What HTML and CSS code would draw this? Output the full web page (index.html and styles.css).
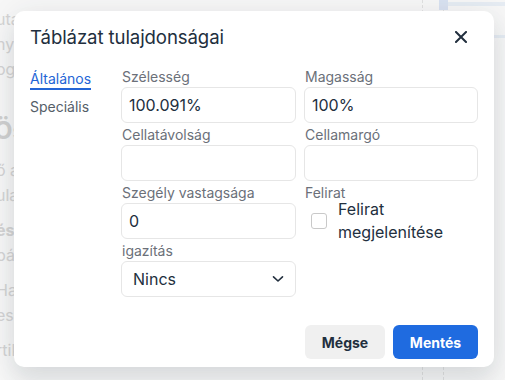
FILE: index.html
```html
<!DOCTYPE html>
<html lang="hu">
<head>
<meta charset="utf-8">
<title>Táblázat tulajdonságai</title>
<link rel="stylesheet" href="styles.css">
</head>
<body>
<div class="doc">
  <p class="line l1">utatás során a dokumentum szerkezetét vizsgáljuk meg</p>
  <p class="line l2">nyomtatott formában is megjelenik a tartalom</p>
  <p class="line l3">oglalás és a további részletek</p>
  <h2 class="head">Összefoglaló</h2>
  <p class="line l4">ő adatok listája</p>
  <p class="line l5">ulajdonságok</p>
  <p class="line l6 bold">és</p>
  <p class="line l7">bárki számára</p>
  <p class="line l8">Határidő</p>
  <p class="line l9">esemény</p>
  <p class="line l10">rtik és megnyugtatja, hogy ily módon nyit</p>
</div>
<div class="deco-col c1"></div>
<div class="deco-col c2"></div>
<div class="deco-top"></div>
<div class="deco-cell"></div>
<div class="deco-mid"></div>

<div class="backdrop"></div>

<div class="dialog" role="dialog">
  <div class="dialog-header">
    <div class="dialog-title">Táblázat tulajdonságai</div>
    <button class="close" aria-label="Bezárás">
      <svg width="12" height="12" viewBox="0 0 12 12"><path d="M1 1 L11 11 M11 1 L1 11" stroke="#222f3e" stroke-width="2" stroke-linecap="square" fill="none"/></svg>
    </button>
  </div>
  <div class="dialog-body">
    <nav class="tabs">
      <div class="tab active">Általános</div>
      <div class="tab">Speciális</div>
    </nav>
    <div class="form">
      <div class="field">
        <label class="lbl">Szélesség</label>
        <div class="input">100.091%</div>
      </div>
      <div class="field">
        <label class="lbl">Magasság</label>
        <div class="input">100%</div>
      </div>
      <div class="field">
        <label class="lbl">Cellatávolság</label>
        <div class="input"></div>
      </div>
      <div class="field">
        <label class="lbl">Cellamargó</label>
        <div class="input"></div>
      </div>
      <div class="field">
        <label class="lbl">Szegély vastagsága</label>
        <div class="input">0</div>
      </div>
      <div class="field">
        <label class="lbl">Felirat</label>
        <div class="check-row">
          <span class="checkbox"></span>
          <span class="check-text">Felirat megjelenítése</span>
        </div>
      </div>
      <div class="field">
        <label class="lbl">igazítás</label>
        <div class="input select">
          <span>Nincs</span>
          <svg width="12" height="8" viewBox="0 0 12 8"><path d="M1.5 1.8 L6 6 L10.5 1.8" stroke="#222f3e" stroke-width="1.6" fill="none" stroke-linecap="round" stroke-linejoin="round"/></svg>
        </div>
      </div>
    </div>
  </div>
  <div class="dialog-footer">
    <button class="btn secondary">Mégse</button>
    <button class="btn primary">Mentés</button>
  </div>
</div>
</body>
</html>
```

FILE: styles.css
```css
* { box-sizing: border-box; }
html, body { margin: 0; padding: 0; }
body {
  width: 505px;
  height: 380px;
  overflow: hidden;
  background: #f7f7f7;
  font-family: Inter, "Noto Sans", sans-serif;
  position: relative;
}

.doc {
  margin-left: -4px;
  padding-top: 7px;
  color: #c2c2c2;
  font-size: 16px;
  white-space: nowrap;
}
.line { margin: 0; line-height: 25px; }
.head { margin: 34px 0 0 -2px; font-size: 24px; font-weight: 700; line-height: 30px; color: #bdbdbd; }
.l4 { margin-top: 12px; }
.l6 { margin-top: 10px; }
.bold { font-weight: 700; }
.l8 { margin-top: 10px; }
.l10 { margin-top: 10px; }

.deco-col { position: absolute; top: 0; bottom: 0; width: 0; border-left: 1px dashed #d6d6d6; }
.c1 { left: 422px; }
.c2 { left: 443px; }
.deco-top { position: absolute; top: 2px; left: 448px; right: 0; height: 4px; background: #dde6f2; }
.deco-cell { position: absolute; top: 0; left: 439px; width: 9px; height: 10px; background: #c9d8ee; }
.deco-mid { position: absolute; top: 35px; left: 440px; right: 0; height: 3px; background: #dde6f2; }

.backdrop { position: absolute; inset: 0; background: rgba(245,245,245,0.35); }

.dialog {
  position: absolute;
  left: 14px;
  top: 11px;
  width: 480px;
  height: 356px;
  background: #fff;
  border-radius: 10px;
  box-shadow: 0 16px 24px rgba(34,47,62,0.10), 0 0 30px rgba(34,47,62,0.08);
  display: flex;
  flex-direction: column;
  color: #222f3e;
}

.dialog-header {
  display: flex;
  align-items: center;
  justify-content: space-between;
  height: 52px;
  padding: 0 16px;
}
.dialog-title { font-size: 18.6px; line-height: 26px; color: #222f3e; letter-spacing: -0.1px; }
.close {
  border: 0; background: none; padding: 0; width: 28px; height: 28px;
  display: flex; align-items: center; justify-content: center;
  margin-right: 3px;
}

.dialog-body {
  display: flex;
  padding: 2px 16px 0 16px;
  flex: 1;
}
.tabs { width: 91px; display: flex; flex-direction: column; padding-top: 5px; }
.tab { font-size: 14px; line-height: 18px; color: #555e68; align-self: flex-start; margin-bottom: 8px; }
.tab.active { color: #2465d6; border-bottom: 2px solid #2465d6; }

.form {
  flex: 1;
  display: grid;
  grid-template-columns: 175px 174px;
  column-gap: 8px;
  align-content: start;
}
.field { display: flex; flex-direction: column; }
.lbl { font-size: 14px; line-height: 18px; color: #6b7079; padding-top: 3px; margin-bottom: 1px; padding-left: 1px; }
.input {
  height: 36px;
  border: 1px solid #e6e6e6;
  border-radius: 6px;
  font-size: 16px;
  line-height: 34px;
  padding: 0 7px;
  color: #222f3e;
}
.select { display: flex; align-items: center; justify-content: space-between; padding: 0 11px 0 11px; }

.check-row { display: flex; align-items: center; padding-left: 7px; height: 36px; }
.checkbox { width: 16px; height: 16px; border: 1px solid #c9c9c9; border-radius: 3px; flex: none; }
.check-text { font-size: 16px; line-height: 23px; color: #222f3e; margin-left: 11px; }

.dialog-footer {
  display: flex;
  justify-content: flex-end;
  gap: 8px;
  padding: 0 16px 8px 16px;
}
.btn {
  height: 34px;
  border: 0;
  border-radius: 6px;
  font-family: Inter, "Noto Sans", sans-serif;
  font-size: 14px;
  font-weight: 700;
  padding: 0 16px;
}
.secondary { background: #f0f0f0; color: #222f3e; width: 80px; }
.primary { background: #1f6be0; color: #fff; width: 85px; }
```
